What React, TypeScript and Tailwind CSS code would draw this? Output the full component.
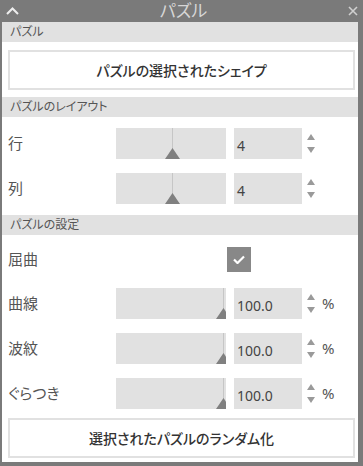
import React from 'react'

const font = "font-['Noto_Sans','Noto_Sans_CJK_JP',sans-serif] [font-feature-settings:'palt']"

function SectionHeader({ title }: { title: string }) {
  return (
    <div className="h-5 bg-[#e1e1e1] pl-2 text-[12px] leading-5 text-[#555]">{title}</div>
  )
}

function Slider({ pos }: { pos: number }) {
  return (
    <div className="relative h-[31px] w-[110px] overflow-hidden bg-[#e1e1e1]">
      <div className="absolute top-0 h-full w-px bg-[#c6c6c6]" style={{ left: pos }} />
      <svg className="absolute bottom-0" style={{ left: pos - 7 }} width="15" height="11" viewBox="0 0 15 11">
        <path d="M7.5 0L15 11H0Z" fill="#808080" />
      </svg>
    </div>
  )
}

function Spinner() {
  return (
    <div className="ml-[5px] flex w-[8px] flex-col gap-[7px]">
      <svg width="8" height="6" viewBox="0 0 8 6">
        <path d="M4 0L8 6H0Z" fill="#9a9a9a" />
      </svg>
      <svg width="8" height="6" viewBox="0 0 8 6">
        <path d="M0 0H8L4 6Z" fill="#9a9a9a" />
      </svg>
    </div>
  )
}

function SliderRow({ label, pos, value, unit }: { label: string; pos: number; value: string; unit?: string }) {
  return (
    <div className="flex h-[31px] items-center">
      <div className="w-[114px] pl-[6px] text-[15px] text-[#555]">{label}</div>
      <Slider pos={pos} />
      <div className="ml-2 flex h-[31px] w-[68px] items-center bg-[#e1e1e1] pl-[3px] pt-[3px] text-[14px] text-[#444]">
        {value}
      </div>
      <Spinner />
      {unit && <div className="ml-[7px] text-[15px] text-[#555]">{unit}</div>}
    </div>
  )
}

function Button({ label }: { label: string }) {
  return (
    <div className="ml-[6px] flex h-10 w-[347px] items-center justify-center border-2 border-[#e1e1e1] bg-white text-[14px] font-medium text-[#333]">
      {label}
    </div>
  )
}

export default function App() {
  return (
    <div className={`${font} h-[466px] w-[363px] bg-[#7a7a7a]`}>
      {/* Title bar */}
      <div className="flex h-[22px] items-center justify-between px-[6px] text-[#e6e6e6]">
        <svg width="13" height="8" viewBox="0 0 13 8">
          <path d="M1 7L6.5 1.5L12 7" stroke="#eeeeee" strokeWidth="2" fill="none" />
        </svg>
        <div className="text-[17px] leading-[22px] text-[#d6d6d6]">パズル</div>
        <svg width="10" height="10" viewBox="0 0 10 10" className="mr-[-1px]">
          <path d="M1 1L9 9M9 1L1 9" stroke="#d0d0d0" strokeWidth="1.6" />
        </svg>
      </div>

      <div className="ml-[2px] mr-[5px] h-[440px] bg-white">
        <SectionHeader title="パズル" />
        <div className="pt-2">
          <Button label="パズルの選択されたシェイプ" />
        </div>

        <div className="mt-[7px]">
          <SectionHeader title="パズルのレイアウト" />
        </div>
        <div className="mt-[11px] flex flex-col gap-[14px]">
          <SliderRow label="行" pos={56} value="4" />
          <SliderRow label="列" pos={56} value="4" />
        </div>

        <div className="mt-[11px]">
          <SectionHeader title="パズルの設定" />
        </div>
        <div className="mt-3 flex h-[25px] items-center">
          <div className="w-[225px] pl-[6px] text-[15px] text-[#555]">屈曲</div>
          <div className="flex h-[25px] w-[24px] items-center justify-center bg-[#888]">
            <svg width="12" height="9" viewBox="0 0 12 9">
              <path d="M1 4.5L4.5 8L11 1.5" stroke="#ffffff" strokeWidth="2.2" fill="none" />
            </svg>
          </div>
        </div>
        <div className="mt-4 flex flex-col gap-[14px]">
          <SliderRow label="曲線" pos={107} value="100.0" unit="%" />
          <SliderRow label="波紋" pos={107} value="100.0" unit="%" />
          <SliderRow label="ぐらつき" pos={107} value="100.0" unit="%" />
        </div>
        <div className="mt-[9px]">
          <Button label="選択されたパズルのランダム化" />
        </div>
      </div>
    </div>
  )
}
